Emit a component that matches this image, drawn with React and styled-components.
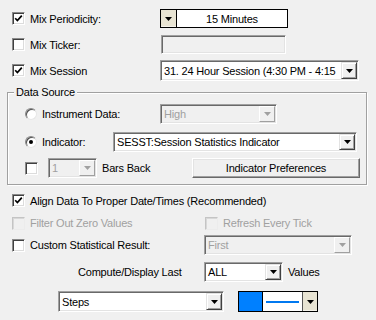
import styled, { createGlobalStyle } from "styled-components";

const GlobalStyle = createGlobalStyle`
  html, body {
    margin: 0;
    padding: 0;
    background: #f0f0f0;
  }
  body {
    font-family: "Liberation Sans", Arial, sans-serif;
    font-size: 11px;
    letter-spacing: -0.2px;
    color: #000;
  }
`;

const Panel = styled.div`
  width: 376px;
  height: 320px;
  box-sizing: border-box;
  padding-top: 9px;
  overflow: hidden;
`;

const Row = styled.div`
  display: flex;
  align-items: center;
  height: ${p => p.$h || 20}px;
  margin-top: ${p => p.$mt || 0}px;
  padding-left: ${p => p.$pl ?? 12}px;
`;

const Cell = styled.div`
  display: flex;
  align-items: center;
  gap: 5px;
  flex: none;
  width: ${p => (p.$w ? `${p.$w}px` : "auto")};
  color: ${p => (p.$disabled ? "#a0a0a0" : "#000")};
  white-space: nowrap;
`;

const Text = styled.span`
  color: ${p => (p.$disabled ? "#a0a0a0" : "#000")};
  margin-left: ${p => p.$ml || 0}px;
  white-space: nowrap;
`;

const Box = styled.span`
  box-sizing: border-box;
  width: 13px;
  height: 13px;
  flex: none;
  display: flex;
  align-items: center;
  justify-content: center;
  background: ${p => (p.$disabled ? "#f0f0f0" : "#fff")};
  border: 1px solid;
  border-color: ${p =>
    p.$disabled ? "#c4c4c4 #ececec #ececec #c4c4c4" : "#8a8a8a #fff #fff #8a8a8a"};
  box-shadow: ${p =>
    p.$disabled
      ? "inset 1px 1px 0 #d8d8d8"
      : "inset 1px 1px 0 #404040, inset -1px -1px 0 #dcdcdc"};
`;

const CheckBox = ({ checked, disabled }) => (
  <Box $disabled={disabled}>
    {checked && (
      <svg width="9" height="9" viewBox="0 0 9 9">
        <path d="M1.2 4.2 L3.4 6.6 L7.8 1.6" fill="none" stroke="#000" strokeWidth="1.7" />
      </svg>
    )}
  </Box>
);

const RadioRing = styled.span`
  box-sizing: border-box;
  width: 12px;
  height: 12px;
  flex: none;
  border-radius: 50%;
  background: #fff;
  border: 1px solid;
  border-color: #8a8a8a #e6e6e6 #e6e6e6 #8a8a8a;
  box-shadow: inset 1px 1px 0 #505050;
  display: flex;
  align-items: center;
  justify-content: center;
`;

const Dot = styled.span`
  width: 4px;
  height: 4px;
  border-radius: 50%;
  background: #000;
`;

const Radio = ({ checked }) => <RadioRing>{checked && <Dot />}</RadioRing>;

const Arrow = ({ color = "#000" }) => (
  <svg width="7" height="4" viewBox="0 0 7 4">
    <polygon points="0,0 7,0 3.5,4" fill={color} />
  </svg>
);

const Sunken = styled.div`
  box-sizing: border-box;
  width: ${p => p.$w}px;
  height: ${p => p.$h || 20}px;
  margin-left: ${p => p.$ml || 0}px;
  flex: none;
  display: flex;
  align-items: stretch;
  padding: 1px;
  background: ${p => (p.$disabled ? "#f0f0f0" : "#fff")};
  border: 1px solid;
  border-color: #a0a0a0 #fff #fff #a0a0a0;
  box-shadow: inset 1px 1px 0 #696969, inset -1px -1px 0 #e3e3e3;
`;

const Value = styled.span`
  flex: 1;
  min-width: 0;
  overflow: hidden;
  white-space: nowrap;
  display: flex;
  align-items: center;
  padding-left: 2px;
  color: ${p => (p.$disabled ? "#a0a0a0" : "#000")};
`;

const DropButton = styled.span`
  box-sizing: border-box;
  width: 16px;
  flex: none;
  display: flex;
  align-items: center;
  justify-content: center;
  background: #f0f0f0;
  border: 1px solid;
  border-color: ${p =>
    p.$disabled ? "#fff #a0a0a0 #a0a0a0 #fff" : "#e3e3e3 #404040 #404040 #e3e3e3"};
  box-shadow: ${p =>
    p.$disabled ? "none" : "inset 1px 1px 0 #fff, inset -1px -1px 0 #a0a0a0"};
`;

const Combo = ({ w, h, ml, value, disabled }) => (
  <Sunken $w={w} $h={h} $ml={ml} $disabled={disabled}>
    <Value $disabled={disabled}>{value}</Value>
    <DropButton $disabled={disabled}>
      <Arrow color={disabled ? "#a0a0a0" : "#000"} />
    </DropButton>
  </Sunken>
);

const FlatCombo = styled.div`
  box-sizing: border-box;
  width: ${p => p.$w}px;
  height: ${p => p.$h}px;
  margin-left: ${p => p.$ml || 0}px;
  flex: none;
  display: flex;
  align-items: stretch;
  border: 1px solid #000;
  background: #fff;
`;

const BeigeButton = styled.span`
  width: ${p => p.$w || 15}px;
  flex: none;
  display: flex;
  align-items: center;
  justify-content: center;
  background: #e8e4d3;
  border-right: ${p => (p.$left ? "1px solid #000" : "none")};
  border-left: ${p => (p.$left ? "none" : "1px solid #555")};
  box-shadow: inset 0 -1px 0 #f4f2ea;
`;

const CenterValue = styled.span`
  flex: 1;
  display: flex;
  align-items: center;
  justify-content: center;
`;

const Swatch = styled.span`
  width: 23px;
  flex: none;
  background: ${p => p.$color};
  border-right: 1px solid #000;
`;

const LineArea = styled.span`
  flex: 1;
  display: flex;
  align-items: center;
  justify-content: center;
`;

const LineSample = styled.span`
  width: 33px;
  height: 2px;
  background: ${p => p.$color};
`;

const Group = styled.fieldset`
  margin: 5px 9px 0 7px;
  padding: 0 0 6px 0;
  min-width: 0;
  border: 1px solid #a0a0a0;
  box-shadow: inset 1px 1px 0 #fff, 1px 1px 0 #fff;
`;

const Legend = styled.legend`
  margin-left: 6px;
  padding: 0 2px;
  line-height: 13px;
  background: #f0f0f0;
`;

const PushButton = styled.button`
  box-sizing: border-box;
  width: ${p => p.$w}px;
  height: ${p => p.$h}px;
  margin-left: auto;
  margin-right: 6px;
  padding: 0;
  font: inherit;
  letter-spacing: inherit;
  color: #000;
  background: #f0f0f0;
  border: 1px solid;
  border-color: #fff #696969 #696969 #fff;
  box-shadow: inset -1px -1px 0 #a0a0a0, inset 1px 1px 0 #e3e3e3;
`;

export default function App() {
  return (
    <>
      <GlobalStyle />
      <Panel>
        <Row $h={19}>
          <Cell $w={148}>
            <CheckBox checked />
            <Text>Mix Periodicity:</Text>
          </Cell>
          <FlatCombo $w={128} $h={19}>
            <BeigeButton $left $w={15}>
              <Arrow />
            </BeigeButton>
            <CenterValue>15 Minutes</CenterValue>
          </FlatCombo>
        </Row>

        <Row $h={19} $mt={7}>
          <Cell $w={148}>
            <CheckBox />
            <Text>Mix Ticker:</Text>
          </Cell>
          <Sunken $w={125} $h={19} $ml={1} $disabled />
        </Row>

        <Row $h={21} $mt={6}>
          <Cell $w={148}>
            <CheckBox checked />
            <Text>Mix Session</Text>
          </Cell>
          <Combo w={199} h={21} value="31. 24 Hour Session (4:30 PM - 4:15" />
        </Row>

        <Group>
          <Legend>Data Source</Legend>
          <Row $pl={17} $mt={5}>
            <Cell $w={135}>
              <Radio />
              <Text>Instrument Data:</Text>
            </Cell>
            <Combo w={117} value="High" disabled />
          </Row>
          <Row $pl={17} $mt={8}>
            <Cell $w={88}>
              <Radio checked />
              <Text>Indicator:</Text>
            </Cell>
            <Combo w={244} value="SESST:Session Statistics Indicator" />
          </Row>
          <Row $pl={17} $mt={6}>
            <CheckBox />
            <Combo w={49} ml={10} value="1" disabled />
            <Text $ml={5}>Bars Back</Text>
            <PushButton $w={168} $h={20}>Indicator Preferences</PushButton>
          </Row>
        </Group>

        <Row $h={19} $mt={6}>
          <Cell>
            <CheckBox checked />
            <Text>Align Data To Proper Date/Times (Recommended)</Text>
          </Cell>
        </Row>

        <Row $mt={3}>
          <Cell $w={193}>
            <CheckBox disabled />
            <Text $disabled>Filter Out Zero Values</Text>
          </Cell>
          <Cell>
            <CheckBox disabled />
            <Text $disabled>Refresh Every Tick</Text>
          </Cell>
        </Row>

        <Row $mt={2}>
          <Cell $w={192}>
            <CheckBox />
            <Text>Custom Statistical Result:</Text>
          </Cell>
          <Combo w={148} value="First" disabled />
        </Row>

        <Row $mt={7} $pl={78}>
          <Cell $w={126}>
            <Text>Compute/Display Last</Text>
          </Cell>
          <Combo w={79} value="ALL" />
          <Text $ml={5}>Values</Text>
        </Row>

        <Row $h={21} $mt={9} $pl={58}>
          <Combo w={166} h={21} value="Steps" />
          <FlatCombo $w={80} $h={21} $ml={14}>
            <Swatch $color="#0080ff" />
            <LineArea>
              <LineSample $color="#0078f0" />
            </LineArea>
            <BeigeButton $w={14}>
              <Arrow />
            </BeigeButton>
          </FlatCombo>
        </Row>
      </Panel>
    </>
  );
}
